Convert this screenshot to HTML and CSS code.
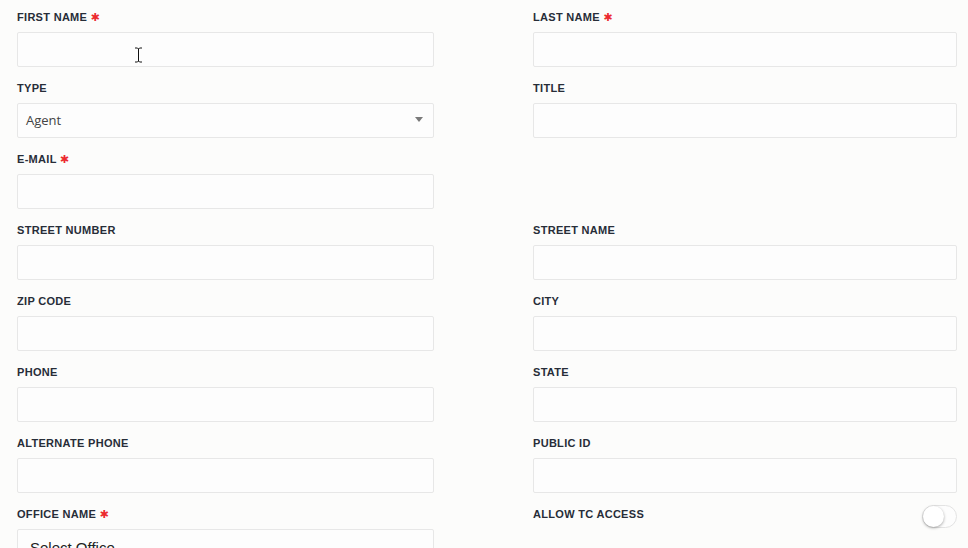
FILE: index.html
```html
<!DOCTYPE html>
<html lang="en">
<head>
    <meta charset="UTF-8">
    <meta name="viewport" content="width=device-width, initial-scale=1.0">
    <title>Add Agent</title>
    <link rel="stylesheet" href="styles.css">
</head>
<body>
    <form class="agent-form">
        <div class="field">
            <label>First Name <span class="req">&#10033;</span></label>
            <div class="input"></div>
        </div>
        <div class="field">
            <label>Last Name <span class="req">&#10033;</span></label>
            <div class="input"></div>
        </div>

        <div class="field">
            <label>Type</label>
            <div class="input select">Agent<span class="caret"></span></div>
        </div>
        <div class="field">
            <label>Title</label>
            <div class="input"></div>
        </div>

        <div class="field">
            <label>E-mail <span class="req">&#10033;</span></label>
            <div class="input"></div>
        </div>
        <div class="field empty"></div>

        <div class="field">
            <label>Street Number</label>
            <div class="input"></div>
        </div>
        <div class="field">
            <label>Street Name</label>
            <div class="input"></div>
        </div>

        <div class="field">
            <label>Zip Code</label>
            <div class="input"></div>
        </div>
        <div class="field">
            <label>City</label>
            <div class="input"></div>
        </div>

        <div class="field">
            <label>Phone</label>
            <div class="input"></div>
        </div>
        <div class="field">
            <label>State</label>
            <div class="input"></div>
        </div>

        <div class="field">
            <label>Alternate Phone</label>
            <div class="input"></div>
        </div>
        <div class="field">
            <label>Public ID</label>
            <div class="input"></div>
        </div>

        <div class="field">
            <label>Office Name <span class="req">&#10033;</span></label>
            <div class="input select office">Select Office</div>
        </div>
        <div class="field toggle-row">
            <label>Allow TC Access</label>
            <span class="toggle"><span class="knob"></span></span>
        </div>
    </form>

    <svg class="mouse" width="9" height="16" viewBox="0 0 9 16">
        <path d="M1 1h2.5l1 1 1-1H8M4.5 2v12M1 15h2.5l1-1 1 1H8" fill="none" stroke="#fff" stroke-width="2.4"/>
        <path d="M1 1h2.5l1 1 1-1H8M4.5 2v12M1 15h2.5l1-1 1 1H8" fill="none" stroke="#111" stroke-width="1"/>
    </svg>
</body>
</html>
```

FILE: styles.css
```css
body {
    margin: 0;
    background: #fcfcfb;
    font-family: "Liberation Sans", Arial, sans-serif;
    overflow: hidden;
}
.agent-form {
    display: grid;
    grid-template-columns: 417px 424px;
    column-gap: 99px;
    row-gap: 14px;
    padding: 10px 17px 0;
}
.field {
    display: flex;
    flex-direction: column;
    gap: 8px;
}
label {
    display: block;
    height: 14px;
    font-size: 11px;
    line-height: 14px;
    font-weight: bold;
    text-transform: uppercase;
    color: #272d38;
    letter-spacing: 0.3px;
}
.req {
    color: #ec2a2f;
    font-family: "DejaVu Sans", sans-serif;
    font-size: 11px;
    line-height: 0;
    font-weight: bold;
}
.input {
    box-sizing: border-box;
    height: 35px;
    border: 1px solid #e7e7e7;
    border-radius: 2px;
    background: #fdfdfd;
    font-family: "Open Sans", sans-serif;
    font-size: 13px;
    color: #444;
    line-height: 33px;
    padding: 0 8px;
    position: relative;
}
.caret {
    position: absolute;
    right: 10px;
    top: 13px;
    border-left: 4px solid transparent;
    border-right: 4px solid transparent;
    border-top: 5px solid #7a7a7a;
}
.office {
    font-family: "Liberation Sans", Arial, sans-serif;
    font-size: 15px;
    padding-left: 12px;
    line-height: 34px;
    padding-top: 1px;
    color: #222;
}
.toggle-row {
    flex-direction: row;
    justify-content: space-between;
    align-items: flex-start;
}
.toggle {
    box-sizing: border-box;
    width: 35px;
    height: 23px;
    margin-top: -2px;
    border: 1px solid #e3e3e3;
    border-radius: 12px;
    background: #fdfdfd;
    position: relative;
}
.knob {
    position: absolute;
    left: 0;
    top: 0;
    width: 21px;
    height: 21px;
    border-radius: 50%;
    background: #fff;
    box-shadow: 0 1px 3px rgba(0, 0, 0, 0.35);
}
.mouse {
    position: absolute;
    left: 134px;
    top: 47px;
}
```
